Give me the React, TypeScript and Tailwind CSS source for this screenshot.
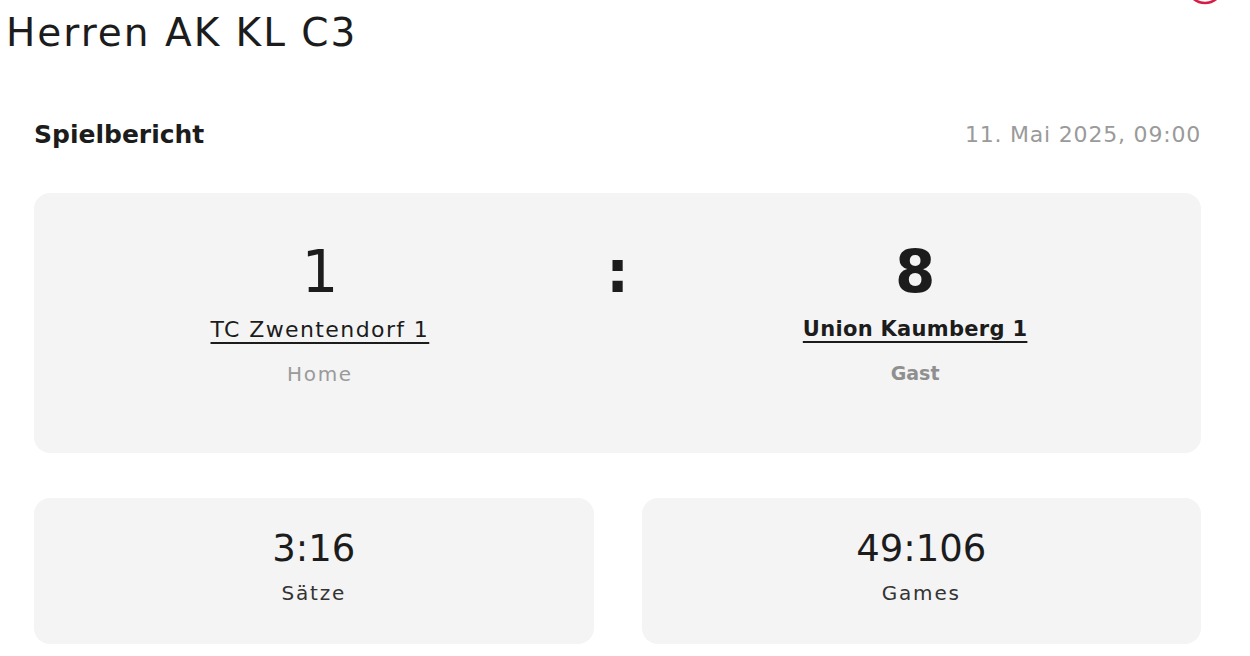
export default function App() {
  return (
    <div
      className="relative min-h-screen w-[1250px] overflow-hidden bg-white text-[#1c1c1c]"
      style={{ fontFamily: "'DejaVu Sans', 'Liberation Sans', sans-serif" }}
    >
      {/* cut-off badge at the top edge */}
      <svg className="absolute left-[1184px] top-[-36px]" width="42" height="42" viewBox="0 0 42 42">
        <circle cx="21" cy="21" r="18" fill="none" stroke="#d81b43" strokeWidth="2.5" />
      </svg>

      <h1 className="pl-[6px] pt-[11px] text-[39px] leading-[44px] font-normal tracking-[2px]">Herren AK KL C3</h1>

      <section className="w-[1167px] ml-[34px] mt-[61px]">
        <div className="flex items-center justify-between">
          <h2 className="text-[25px] font-bold">Spielbericht</h2>
          <span className="text-[22px] text-[#9a9a9a] tracking-[0.8px]">11. Mai 2025, 09:00</span>
        </div>

        <div className="mt-[39px] h-[260px] rounded-[16px] bg-[#f4f4f4] flex justify-center gap-[86px] pt-[43px]">
          <div className="w-[400px] flex flex-col items-center">
            <div className="text-[58px] leading-[72px] font-normal">1</div>
            <a className="mt-[5px] text-[22px] tracking-[1.4px] underline underline-offset-[5px] decoration-[1.5px]">TC Zwentendorf 1</a>
            <div className="mt-[13px] text-[20px] tracking-[1.7px] text-[#9a9a9a]">Home</div>
          </div>
          <div className="text-[58px] leading-[72px] font-bold">:</div>
          <div className="w-[400px] flex flex-col items-center">
            <div className="text-[58px] leading-[72px] font-bold">8</div>
            <a className="mt-[6px] text-[21px] font-bold tracking-[0.3px] underline underline-offset-[5px] decoration-[1.5px]">Union Kaumberg 1</a>
            <div className="mt-[14px] text-[19px] font-bold text-[#8f8f8f]">Gast</div>
          </div>
        </div>

        <div className="mt-[45px] grid grid-cols-2 gap-[48px]">
          <div className="h-[146px] rounded-[16px] bg-[#f4f4f4] flex flex-col items-center pt-[28px]">
            <div className="text-[37px] leading-[46px]">3:16</div>
            <div className="mt-[6px] text-[20px] tracking-[1.8px] text-[#333]">Sätze</div>
          </div>
          <div className="h-[146px] rounded-[16px] bg-[#f4f4f4] flex flex-col items-center pt-[28px]">
            <div className="text-[37px] leading-[46px]">49:106</div>
            <div className="mt-[6px] text-[20px] tracking-[1.8px] text-[#333]">Games</div>
          </div>
        </div>
      </section>
    </div>
  );
}
